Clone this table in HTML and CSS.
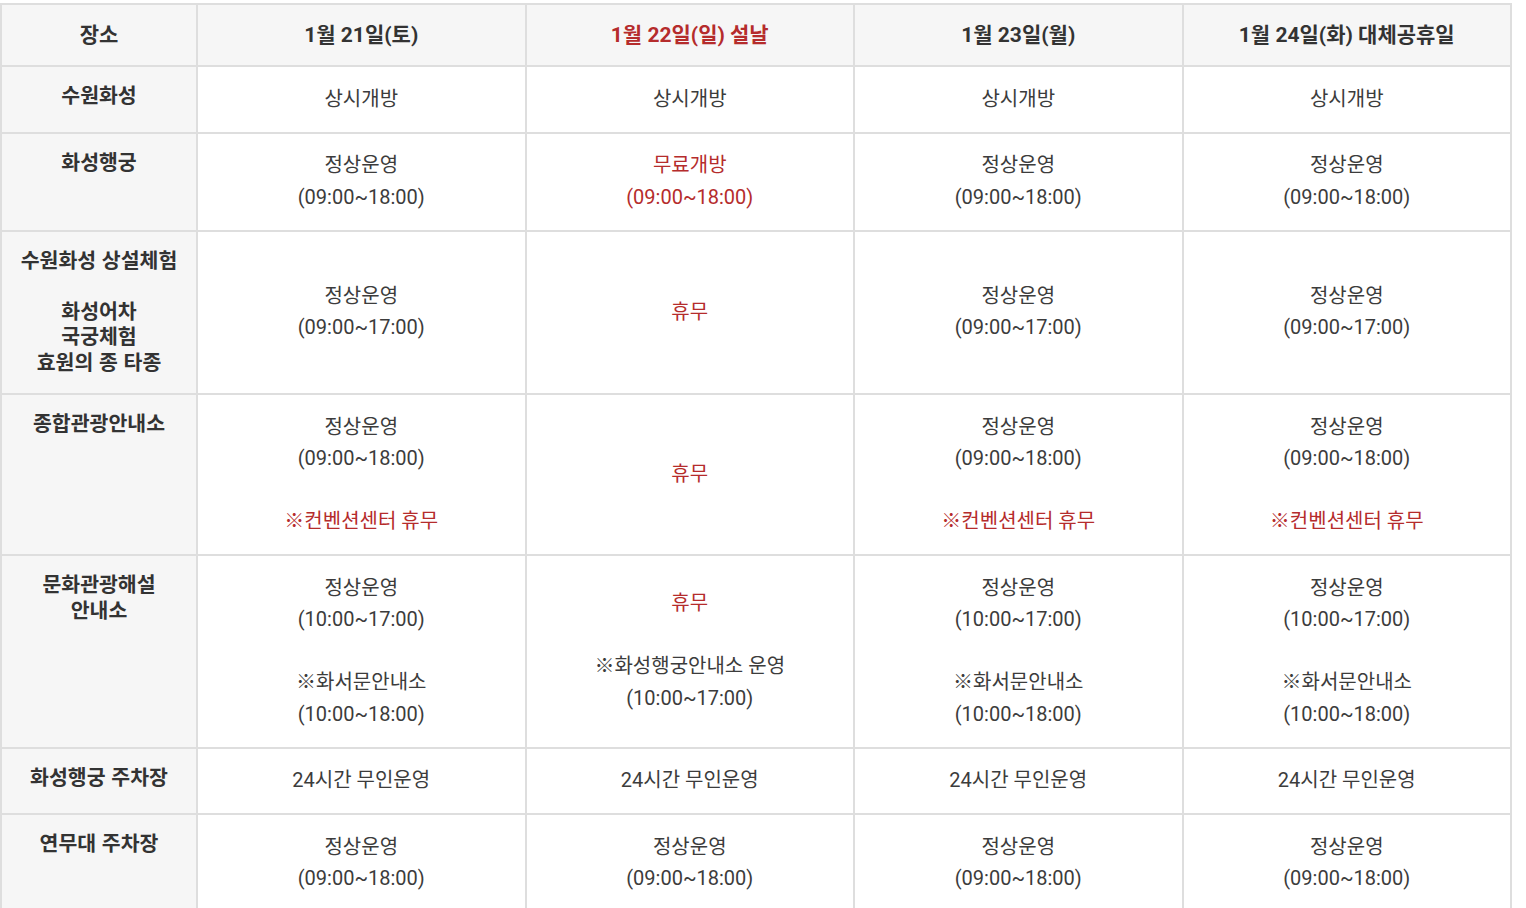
FILE: index.html
```html
<!DOCTYPE html>
<html lang="ko">
<head>
<meta charset="utf-8">
<title>설 연휴 운영안내</title>
<link rel="stylesheet" href="styles.css">
</head>
<body>
<table class="schedule">
  <colgroup>
    <col class="col-place">
    <col class="col-day">
    <col class="col-day">
    <col class="col-day">
    <col class="col-day">
  </colgroup>
  <thead>
    <tr>
      <th class="head">장소</th>
      <th class="head">1월 21일(토)</th>
      <th class="head red">1월 22일(일) 설날</th>
      <th class="head">1월 23일(월)</th>
      <th class="head">1월 24일(화) 대체공휴일</th>
    </tr>
  </thead>
  <tbody>
    <tr>
      <th class="place">수원화성</th>
      <td>상시개방</td>
      <td>상시개방</td>
      <td>상시개방</td>
      <td>상시개방</td>
    </tr>
    <tr>
      <th class="place">화성행궁</th>
      <td>정상운영<br>(09:00~18:00)</td>
      <td class="red">무료개방<br>(09:00~18:00)</td>
      <td>정상운영<br>(09:00~18:00)</td>
      <td>정상운영<br>(09:00~18:00)</td>
    </tr>
    <tr>
      <th class="place">수원화성 상설체험<br><br>화성어차<br>국궁체험<br>효원의 종 타종</th>
      <td>정상운영<br>(09:00~17:00)</td>
      <td class="red">휴무</td>
      <td>정상운영<br>(09:00~17:00)</td>
      <td>정상운영<br>(09:00~17:00)</td>
    </tr>
    <tr>
      <th class="place">종합관광안내소</th>
      <td>정상운영<br>(09:00~18:00)<br><br><span class="red">※컨벤션센터 휴무</span></td>
      <td class="red">휴무</td>
      <td>정상운영<br>(09:00~18:00)<br><br><span class="red">※컨벤션센터 휴무</span></td>
      <td>정상운영<br>(09:00~18:00)<br><br><span class="red">※컨벤션센터 휴무</span></td>
    </tr>
    <tr>
      <th class="place">문화관광해설<br>안내소</th>
      <td>정상운영<br>(10:00~17:00)<br><br>※화서문안내소<br>(10:00~18:00)</td>
      <td><span class="red">휴무</span><br><br>※화성행궁안내소 운영<br>(10:00~17:00)</td>
      <td>정상운영<br>(10:00~17:00)<br><br>※화서문안내소<br>(10:00~18:00)</td>
      <td>정상운영<br>(10:00~17:00)<br><br>※화서문안내소<br>(10:00~18:00)</td>
    </tr>
    <tr>
      <th class="place">화성행궁 주차장</th>
      <td>24시간 무인운영</td>
      <td>24시간 무인운영</td>
      <td>24시간 무인운영</td>
      <td>24시간 무인운영</td>
    </tr>
    <tr>
      <th class="place">연무대 주차장</th>
      <td>정상운영<br>(09:00~18:00)</td>
      <td>정상운영<br>(09:00~18:00)</td>
      <td>정상운영<br>(09:00~18:00)</td>
      <td>정상운영<br>(09:00~18:00)</td>
    </tr>
  </tbody>
</table>
</body>
</html>
```

FILE: styles.css
```css
html, body {
  background: #ffffff;
}

body {
  margin: 3px 0 0 0;
  font-family: Roboto, "Noto Sans CJK KR", sans-serif;
  color: #3c3c3c;
}

.schedule {
  width: 1510px;
  border-collapse: collapse;
  table-layout: fixed;
}

.col-place {
  width: 196px;
}

.col-day {
  width: 328.5px;
}

.schedule th,
.schedule td {
  border: 2px solid #dedede;
  text-align: center;
}

.head {
  background: #f6f6f6;
  font-size: 21px;
  font-weight: 700;
  line-height: 31px;
  padding: 14.5px 6px;
  vertical-align: middle;
  color: #333333;
}

.place {
  background: #f6f6f6;
  font-family: "Noto Sans CJK KR", sans-serif;
  font-size: 20.5px;
  font-weight: 700;
  line-height: 25.5px;
  padding: 15px 4px 19px;
  vertical-align: top;
  color: #333333;
}

.schedule td {
  font-size: 20px;
  font-weight: 400;
  line-height: 31.5px;
  padding: 16.5px 6px;
  vertical-align: middle;
  background: #ffffff;
}

.red,
.schedule .red {
  color: #b52c2c;
}
```
